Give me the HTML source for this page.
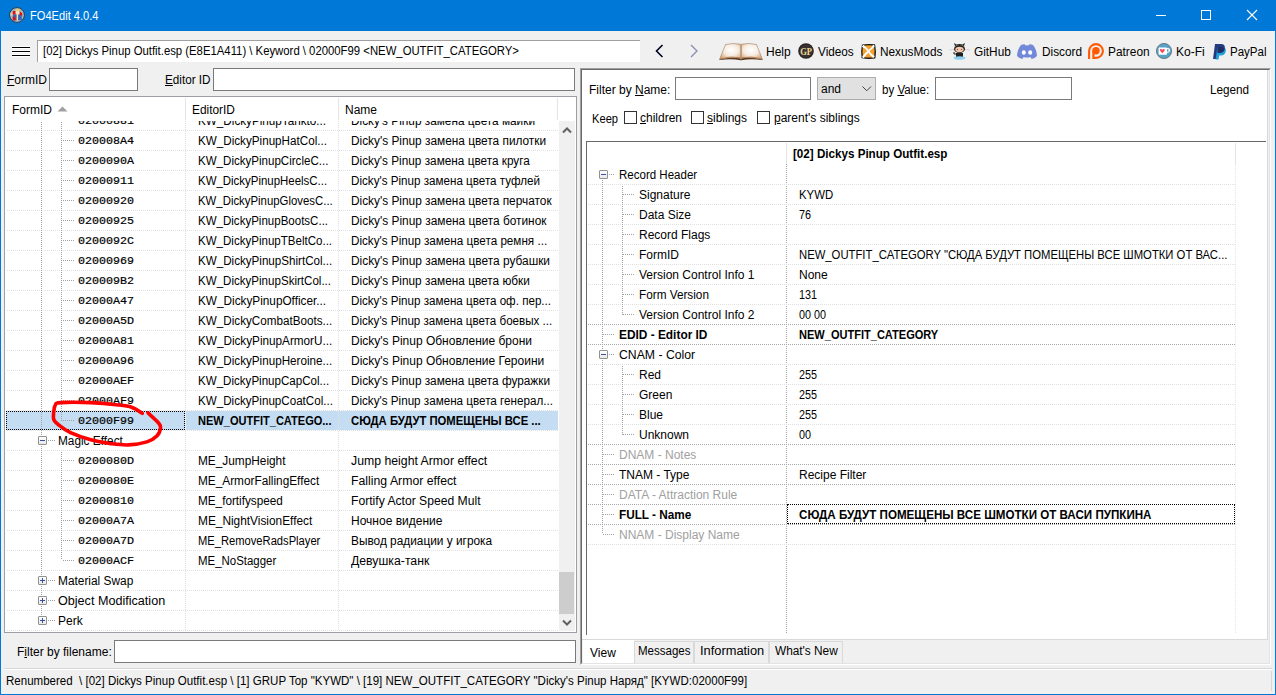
<!DOCTYPE html>
<html><head><meta charset="utf-8"><title>FO4Edit</title>
<style>
html,body{margin:0;padding:0;}
body{width:1276px;height:695px;position:relative;overflow:hidden;background:#f0f0f0;font-family:"Liberation Sans",sans-serif;font-size:12px;color:#000;}
div{position:absolute;box-sizing:content-box;}
div div{position:absolute;}
.t{white-space:pre;line-height:15px;}
u{text-decoration:underline;text-underline-offset:1px;}
</style></head><body>
<div style="left:0px;top:0px;width:1276px;height:31px;background:#0078d7;"></div>
<div style="left:0px;top:0px;width:1px;height:695px;background:#0078d7;"></div>
<div style="left:1275px;top:0px;width:1px;height:695px;background:#0078d7;"></div>
<div style="left:0px;top:694px;width:1276px;height:1px;background:#0078d7;"></div>
<svg style="position:absolute;left:9px;top:7px" width="16" height="16" viewBox="0 0 16 16">
<circle cx="8" cy="8" r="7.4" fill="#a9b6be" stroke="#26323a" stroke-width="0.9"/>
<rect x="3.8" y="7.5" width="9" height="5.8" fill="#3c64b4"/>
<ellipse cx="2.6" cy="7.2" rx="1.4" ry="1.9" fill="#d8c4a4"/>
<rect x="3.8" y="4" width="2.8" height="3.4" fill="#e01010"/>
<path d="M10.2 4 L13 6 L13.4 8.6 L10.8 8.2 Z" fill="#e01010"/>
<rect x="3.8" y="9.8" width="2.6" height="3.6" fill="#e01010"/>
<ellipse cx="8.6" cy="5.2" rx="2" ry="2.2" fill="#f2e2c8"/>
<ellipse cx="8.6" cy="3" rx="2.2" ry="1.3" fill="#e6d070"/>
<rect x="7.6" y="7" width="1.5" height="6.5" fill="#f0e4a0"/>
</svg>
<div class="t" style="left:30px;top:9px;font-family:'Liberation Sans', sans-serif;font-size:12px;color:#fff;transform:scaleX(0.925);transform-origin:0 0;">FO4Edit 4.0.4</div>
<div style="left:1156px;top:15px;width:10px;height:1px;background:#fff;"></div>
<div style="left:1201px;top:10px;width:8px;height:8px;border:1px solid #fff;"></div>
<svg style="position:absolute;left:1246px;top:9px" width="12" height="12" viewBox="0 0 12 12"><path d="M1 1 L11 11 M11 1 L1 11" stroke="#fff" stroke-width="1.1"/></svg>
<div style="left:12px;top:46px;width:18px;height:1px;background:#fff;"></div>
<div style="left:12px;top:47px;width:18px;height:1px;background:#000;"></div>
<div style="left:12px;top:48px;width:18px;height:1px;background:#fff;"></div>
<div style="left:12px;top:50px;width:18px;height:1px;background:#fff;"></div>
<div style="left:12px;top:51px;width:18px;height:1px;background:#000;"></div>
<div style="left:12px;top:52px;width:18px;height:1px;background:#fff;"></div>
<div style="left:12px;top:54px;width:18px;height:1px;background:#fff;"></div>
<div style="left:12px;top:55px;width:18px;height:1px;background:#000;"></div>
<div style="left:12px;top:56px;width:18px;height:1px;background:#fff;"></div>
<div style="left:37px;top:40px;width:602px;height:21px;background:#fff;border-top:1px solid #a0a0a0;border-left:1px solid #a0a0a0;"></div>
<div class="t" style="left:43px;top:44px;font-family:'Liberation Sans', sans-serif;font-size:12px;color:#000;transform:scaleX(0.944);transform-origin:0 0;">[02] Dickys Pinup Outfit.esp (E8E1A411) \ Keyword \ 02000F99 &lt;NEW_OUTFIT_CATEGORY&gt;</div>
<svg style="position:absolute;left:653px;top:43px" width="14" height="16" viewBox="0 0 14 16"><path d="M9.5 2 L3.5 8 L9.5 14" fill="none" stroke="#000028" stroke-width="1.6"/></svg>
<svg style="position:absolute;left:687px;top:43px" width="14" height="16" viewBox="0 0 14 16"><path d="M4 2 L10 8 L4 14" fill="none" stroke="#8a8ab8" stroke-width="1.3"/></svg>
<svg style="position:absolute;left:719px;top:43px" width="44" height="18" viewBox="0 0 44 18">
<defs><radialGradient id="pg1" cx="0.55" cy="0.4" r="0.65"><stop offset="0" stop-color="#ffffff"/><stop offset="0.55" stop-color="#f7ebe0"/><stop offset="1" stop-color="#d9a77a"/></radialGradient>
<radialGradient id="pg2" cx="0.45" cy="0.4" r="0.65"><stop offset="0" stop-color="#ffffff"/><stop offset="0.55" stop-color="#f7ebe0"/><stop offset="1" stop-color="#d9a77a"/></radialGradient></defs>
<path d="M0.5 16.5 L6.5 1.5 Q14 -0.2 21.5 1.2 L21.5 15.5 Q12 13.5 0.5 16.5 Z" fill="url(#pg1)" stroke="#8a6a50" stroke-width="0.5"/>
<path d="M43.5 16.5 L37.5 1.5 Q30 -0.2 22.5 1.2 L22.5 15.5 Q32 13.5 43.5 16.5 Z" fill="url(#pg2)" stroke="#8a6a50" stroke-width="0.5"/>
<path d="M0.5 16.5 Q12 13.5 21.5 15.5 L22.5 15.5 Q32 13.5 43.5 16.5 L43.5 17 Q32 15.2 22.5 17.2 L21.5 17.2 Q12 15.2 0.5 17 Z" fill="#5a3a22"/>
<path d="M1.5 15.8 Q12 12.8 21.5 14.8 L22.5 14.8 Q32 12.8 42.5 15.8" fill="none" stroke="#b07a50" stroke-width="0.9"/>
<path d="M22 1.2 V16.5" stroke="#c89a78" stroke-width="0.8"/>
</svg>
<div class="t" style="left:766px;top:45px;font-family:'Liberation Sans', sans-serif;font-size:12px;color:#000;">Help</div>
<svg style="position:absolute;left:798px;top:43px" width="16" height="16" viewBox="0 0 16 16">
<circle cx="8" cy="8" r="7.8" fill="#2a2220"/><circle cx="8" cy="8" r="6.6" fill="#3a3030"/>
<text x="2.2" y="12.2" font-family="Liberation Serif" font-size="10.5" font-weight="bold" fill="#eedc96" textLength="11.8" lengthAdjust="spacingAndGlyphs">GP</text></svg>
<div class="t" style="left:818px;top:45px;font-family:'Liberation Sans', sans-serif;font-size:12px;color:#000;transform:scaleX(0.98);transform-origin:0 0;">Videos</div>
<svg style="position:absolute;left:860px;top:43px" width="17" height="17" viewBox="0 0 17 17">
<path d="M2.5 2.2 Q8.5 1 14.6 2 Q15.8 8.5 14.8 14.8 Q8.5 15.8 2.2 14.6 Q1.2 8.5 2.5 2.2 Z" fill="#f6a030" stroke="#151515" stroke-width="1.3"/>
<path d="M2.8 3.5 Q6 4.5 8.2 8 Q6.5 5.2 3.5 2.8 Z M13.5 2.6 Q12 6 8.5 7.8 Q11.5 6 13.8 3.2 Z M13.8 13.5 Q11 12 8.8 8.8 Q10.8 11.8 13.2 14 Z M3 13.8 Q5 10.5 8.2 8.8 Q5.5 11 3.6 14.2 Z" fill="#fff" stroke="#fff" stroke-width="1.6" stroke-linejoin="round"/>
</svg>
<div class="t" style="left:880px;top:45px;font-family:'Liberation Sans', sans-serif;font-size:12px;color:#000;transform:scaleX(0.985);transform-origin:0 0;">NexusMods</div>
<svg style="position:absolute;left:949px;top:41px" width="21" height="19" viewBox="0 0 21 19">
<path d="M0 9 L5 8.5 M16 8.5 L21 9" stroke="#c0c0c0" stroke-width="0.6"/>
<path d="M5 2 L6 5 Q10.5 3 15 5 L16 2 L13.5 3.5 Q10.5 2.5 7.5 3.5 Z" fill="#202020"/>
<ellipse cx="10.5" cy="8" rx="5.5" ry="4" fill="#202020"/>
<ellipse cx="10.5" cy="8.5" rx="4.2" ry="2.8" fill="#f4c9b0"/>
<circle cx="8.5" cy="8.5" r="0.7" fill="#a05050"/><circle cx="12.5" cy="8.5" r="0.7" fill="#a05050"/>
<path d="M7 12 L14 12 L14 16 L7 16 Z" fill="#202020"/>
<path d="M7 13 Q4 14 5 11" stroke="#202020" stroke-width="1" fill="none"/>
<ellipse cx="10.5" cy="17" rx="6" ry="1.8" fill="#8ecfef"/>
</svg>
<div class="t" style="left:974px;top:45px;font-family:'Liberation Sans', sans-serif;font-size:12px;color:#000;transform:scaleX(0.985);transform-origin:0 0;">GitHub</div>
<svg style="position:absolute;left:1016px;top:43px" width="22" height="17" viewBox="0 0 22 17">
<path d="M5 2 Q8 0.8 9 1.5 L9.5 2.5 Q11 2.2 12.5 2.5 L13 1.5 Q14 0.8 17 2 Q20.5 6 21 13 Q18.8 15.5 15.5 16 L14.5 14 Q11 15 7.5 14 L6.5 16 Q3.2 15.5 1 13 Q1.5 6 5 2 Z" fill="#7289da"/>
<ellipse cx="7.8" cy="9.5" rx="2" ry="2.2" fill="#fff"/><ellipse cx="14.2" cy="9.5" rx="2" ry="2.2" fill="#fff"/>
</svg>
<div class="t" style="left:1042px;top:45px;font-family:'Liberation Sans', sans-serif;font-size:12px;color:#000;transform:scaleX(0.985);transform-origin:0 0;">Discord</div>
<svg style="position:absolute;left:1086px;top:42px" width="20" height="18" viewBox="0 0 20 18">
<path d="M3.1 17 V9 A6.9 6.9 0 1 1 10 15.9 L8 15.9" fill="none" stroke="#ff5900" stroke-width="2.1"/>
<circle cx="10" cy="8.8" r="3.7" fill="#ff5900"/>
<rect x="6.3" y="8.8" width="2.2" height="8.2" fill="#ff5900"/>
</svg>
<div class="t" style="left:1108px;top:45px;font-family:'Liberation Sans', sans-serif;font-size:12px;color:#000;transform:scaleX(0.99);transform-origin:0 0;">Patreon</div>
<svg style="position:absolute;left:1156px;top:43px" width="17" height="17" viewBox="0 0 17 17">
<circle cx="8" cy="8" r="7.6" fill="#58a2c6" stroke="#5a6a72" stroke-width="0.8"/>
<rect x="2.6" y="4.4" width="8.4" height="7.4" rx="0.8" fill="#fff"/>
<path d="M10.5 5 H12.2 Q14.3 5.2 14.2 7.5 Q14 9.6 11.8 9.7 H10.5 Z" fill="#fff"/>
<rect x="11" y="6.2" width="1.5" height="2.4" fill="#58a2c6"/>
<path d="M6.3 10.2 L4 7.8 Q3.3 6.3 4.8 6 Q5.7 5.9 6.3 6.8 Q6.9 5.9 7.8 6 Q9.3 6.3 8.6 7.8 Z" fill="#ff4a5a"/>
</svg>
<div class="t" style="left:1176px;top:45px;font-family:'Liberation Sans', sans-serif;font-size:12px;color:#000;">Ko-Fi</div>
<svg style="position:absolute;left:1212px;top:43px" width="15" height="17" viewBox="0 0 15 17">
<path d="M3 1 L9 1 Q13.5 1.2 12.8 5.5 Q12 10 7.5 10 L5.5 10 L4.5 16 L1 16 Z" fill="#253b80"/>
<path d="M5.5 4 L10 4 Q14.5 4.5 13.8 8 Q13 12.5 8.7 12.5 L7.2 12.5 L6.5 16.5 L3.5 16.5 Z" fill="#179bd7" opacity="0.95"/>
<path d="M5.5 4 L10 4 Q12.5 4.2 12.8 5.5 Q12 10 7.5 10 L5.5 10 Z" fill="#222d65"/>
</svg>
<div class="t" style="left:1230px;top:45px;font-family:'Liberation Sans', sans-serif;font-size:12px;color:#000;transform:scaleX(0.96);transform-origin:0 0;">PayPal</div>
<div class="t" style="left:7px;top:73px;font-family:'Liberation Sans', sans-serif;font-size:12px;color:#000;"><u>F</u>ormID</div>
<div style="left:49px;top:68px;width:87px;height:21px;background:#fff;border:1px solid #7a7a7a;"></div>
<div class="t" style="left:165px;top:73px;font-family:'Liberation Sans', sans-serif;font-size:12px;color:#000;transform:scaleX(0.976);transform-origin:0 0;"><u>E</u>ditor ID</div>
<div style="left:213px;top:68px;width:360px;height:21px;background:#fff;border:1px solid #7a7a7a;"></div>
<div style="left:4px;top:96px;width:571px;height:535px;background:#fff;border:1px solid #9ca0a6;"></div>
<div class="t" style="left:12px;top:103px;font-family:'Liberation Sans', sans-serif;font-size:12px;color:#000;">FormID</div>
<svg style="position:absolute;left:57px;top:106px" width="11" height="6" viewBox="0 0 11 6"><path d="M0.5 5.5 L5.5 0.5 L10.5 5.5 Z" fill="#a0a0a0"/></svg>
<div class="t" style="left:192px;top:103px;font-family:'Liberation Sans', sans-serif;font-size:12px;color:#000;transform:scaleX(0.99);transform-origin:0 0;">EditorID</div>
<div class="t" style="left:345px;top:103px;font-family:'Liberation Sans', sans-serif;font-size:12px;color:#000;">Name</div>
<div style="left:185px;top:98px;width:1px;height:22px;background:#e5e5e5;"></div>
<div style="left:338px;top:98px;width:1px;height:22px;background:#e5e5e5;"></div>
<div style="left:557px;top:98px;width:1px;height:22px;background:#e5e5e5;"></div>
<div style="left:5px;top:121px;width:554px;height:510px;overflow:hidden;">
<div style="left:2px;top:9px;width:551px;height:1px;background:repeating-linear-gradient(90deg,#e0e0e0 0 1px,transparent 1px 2px);"></div>
<div style="left:2px;top:29px;width:551px;height:1px;background:repeating-linear-gradient(90deg,#e0e0e0 0 1px,transparent 1px 2px);"></div>
<div style="left:2px;top:49px;width:551px;height:1px;background:repeating-linear-gradient(90deg,#e0e0e0 0 1px,transparent 1px 2px);"></div>
<div style="left:2px;top:69px;width:551px;height:1px;background:repeating-linear-gradient(90deg,#e0e0e0 0 1px,transparent 1px 2px);"></div>
<div style="left:2px;top:89px;width:551px;height:1px;background:repeating-linear-gradient(90deg,#e0e0e0 0 1px,transparent 1px 2px);"></div>
<div style="left:2px;top:109px;width:551px;height:1px;background:repeating-linear-gradient(90deg,#e0e0e0 0 1px,transparent 1px 2px);"></div>
<div style="left:2px;top:129px;width:551px;height:1px;background:repeating-linear-gradient(90deg,#e0e0e0 0 1px,transparent 1px 2px);"></div>
<div style="left:2px;top:149px;width:551px;height:1px;background:repeating-linear-gradient(90deg,#e0e0e0 0 1px,transparent 1px 2px);"></div>
<div style="left:2px;top:169px;width:551px;height:1px;background:repeating-linear-gradient(90deg,#e0e0e0 0 1px,transparent 1px 2px);"></div>
<div style="left:2px;top:189px;width:551px;height:1px;background:repeating-linear-gradient(90deg,#e0e0e0 0 1px,transparent 1px 2px);"></div>
<div style="left:2px;top:209px;width:551px;height:1px;background:repeating-linear-gradient(90deg,#e0e0e0 0 1px,transparent 1px 2px);"></div>
<div style="left:2px;top:229px;width:551px;height:1px;background:repeating-linear-gradient(90deg,#e0e0e0 0 1px,transparent 1px 2px);"></div>
<div style="left:2px;top:249px;width:551px;height:1px;background:repeating-linear-gradient(90deg,#e0e0e0 0 1px,transparent 1px 2px);"></div>
<div style="left:2px;top:269px;width:551px;height:1px;background:repeating-linear-gradient(90deg,#e0e0e0 0 1px,transparent 1px 2px);"></div>
<div style="left:2px;top:289px;width:551px;height:1px;background:repeating-linear-gradient(90deg,#e0e0e0 0 1px,transparent 1px 2px);"></div>
<div style="left:1px;top:290px;width:179px;height:19px;background:#c4ddf3;"></div>
<div style="left:181px;top:290px;width:372px;height:19px;background:#c4ddf3;"></div>
<div style="left:2px;top:309px;width:551px;height:1px;background:repeating-linear-gradient(90deg,#e0e0e0 0 1px,transparent 1px 2px);"></div>
<div style="left:2px;top:329px;width:551px;height:1px;background:repeating-linear-gradient(90deg,#e0e0e0 0 1px,transparent 1px 2px);"></div>
<div style="left:2px;top:349px;width:551px;height:1px;background:repeating-linear-gradient(90deg,#e0e0e0 0 1px,transparent 1px 2px);"></div>
<div style="left:2px;top:369px;width:551px;height:1px;background:repeating-linear-gradient(90deg,#e0e0e0 0 1px,transparent 1px 2px);"></div>
<div style="left:2px;top:389px;width:551px;height:1px;background:repeating-linear-gradient(90deg,#e0e0e0 0 1px,transparent 1px 2px);"></div>
<div style="left:2px;top:409px;width:551px;height:1px;background:repeating-linear-gradient(90deg,#e0e0e0 0 1px,transparent 1px 2px);"></div>
<div style="left:2px;top:429px;width:551px;height:1px;background:repeating-linear-gradient(90deg,#e0e0e0 0 1px,transparent 1px 2px);"></div>
<div style="left:2px;top:449px;width:551px;height:1px;background:repeating-linear-gradient(90deg,#e0e0e0 0 1px,transparent 1px 2px);"></div>
<div style="left:2px;top:469px;width:551px;height:1px;background:repeating-linear-gradient(90deg,#e0e0e0 0 1px,transparent 1px 2px);"></div>
<div style="left:2px;top:489px;width:551px;height:1px;background:repeating-linear-gradient(90deg,#e0e0e0 0 1px,transparent 1px 2px);"></div>
<div style="left:2px;top:509px;width:551px;height:1px;background:repeating-linear-gradient(90deg,#e0e0e0 0 1px,transparent 1px 2px);"></div>
<div style="left:2px;top:529px;width:551px;height:1px;background:repeating-linear-gradient(90deg,#e0e0e0 0 1px,transparent 1px 2px);"></div>
<div style="left:2px;top:549px;width:551px;height:1px;background:repeating-linear-gradient(90deg,#e0e0e0 0 1px,transparent 1px 2px);"></div>
<div style="left:2px;top:569px;width:551px;height:1px;background:repeating-linear-gradient(90deg,#e0e0e0 0 1px,transparent 1px 2px);"></div>
<div style="left:2px;top:589px;width:551px;height:1px;background:repeating-linear-gradient(90deg,#e0e0e0 0 1px,transparent 1px 2px);"></div>
<div style="left:180px;top:0px;width:1px;height:510px;background:repeating-linear-gradient(180deg,#e0e0e0 0 1px,transparent 1px 2px);"></div>
<div style="left:333px;top:0px;width:1px;height:510px;background:repeating-linear-gradient(180deg,#e0e0e0 0 1px,transparent 1px 2px);"></div>
<div style="left:36px;top:1px;width:1px;height:449px;background:repeating-linear-gradient(180deg,#a0a0a0 0 1px,transparent 1px 2px);"></div>
<div style="left:36px;top:1px;width:1px;height:499px;background:repeating-linear-gradient(180deg,#a0a0a0 0 1px,transparent 1px 2px);"></div>
<div style="left:56px;top:1px;width:1px;height:299px;background:repeating-linear-gradient(180deg,#a0a0a0 0 1px,transparent 1px 2px);"></div>
<div style="left:56px;top:331px;width:1px;height:108px;background:repeating-linear-gradient(180deg,#a0a0a0 0 1px,transparent 1px 2px);"></div>
<div style="left:58px;top:-1px;width:11px;height:1px;background:repeating-linear-gradient(90deg,#a0a0a0 0 1px,transparent 1px 2px);"></div>
<div class="t" style="left:73px;top:-7px;font-family:'Liberation Mono',monospace;font-size:11.7px;-webkit-text-stroke:0.2px #000;">02000881</div>
<div class="t" style="left:193px;top:-7px;font-size:12px;transform:scaleX(0.9748);transform-origin:0 0;">KW_DickyPinupTanktо...</div>
<div class="t" style="left:346px;top:-7px;font-size:12px;transform:scaleX(0.9835);transform-origin:0 0;">Dicky&#x27;s Pinup замена цвета майки</div>
<div style="left:58px;top:19px;width:11px;height:1px;background:repeating-linear-gradient(90deg,#a0a0a0 0 1px,transparent 1px 2px);"></div>
<div class="t" style="left:73px;top:13px;font-family:'Liberation Mono',monospace;font-size:11.7px;-webkit-text-stroke:0.2px #000;">020008A4</div>
<div class="t" style="left:193px;top:13px;font-size:12px;transform:scaleX(0.9718);transform-origin:0 0;">KW_DickyPinupHatCol...</div>
<div class="t" style="left:346px;top:13px;font-size:12px;transform:scaleX(0.9869);transform-origin:0 0;">Dicky&#x27;s Pinup замена цвета пилотки</div>
<div style="left:58px;top:39px;width:11px;height:1px;background:repeating-linear-gradient(90deg,#a0a0a0 0 1px,transparent 1px 2px);"></div>
<div class="t" style="left:73px;top:33px;font-family:'Liberation Mono',monospace;font-size:11.7px;-webkit-text-stroke:0.2px #000;">0200090A</div>
<div class="t" style="left:193px;top:33px;font-size:12px;transform:scaleX(0.963);transform-origin:0 0;">KW_DickyPinupCircleC...</div>
<div class="t" style="left:346px;top:33px;font-size:12px;transform:scaleX(0.9825);transform-origin:0 0;">Dicky&#x27;s Pinup замена цвета круга</div>
<div style="left:58px;top:59px;width:11px;height:1px;background:repeating-linear-gradient(90deg,#a0a0a0 0 1px,transparent 1px 2px);"></div>
<div class="t" style="left:73px;top:53px;font-family:'Liberation Mono',monospace;font-size:11.7px;-webkit-text-stroke:0.2px #000;">02000911</div>
<div class="t" style="left:193px;top:53px;font-size:12px;transform:scaleX(0.954);transform-origin:0 0;">KW_DickyPinupHeelsC...</div>
<div class="t" style="left:346px;top:53px;font-size:12px;transform:scaleX(0.9697);transform-origin:0 0;">Dicky&#x27;s Pinup замена цвета туфлей</div>
<div style="left:58px;top:79px;width:11px;height:1px;background:repeating-linear-gradient(90deg,#a0a0a0 0 1px,transparent 1px 2px);"></div>
<div class="t" style="left:73px;top:73px;font-family:'Liberation Mono',monospace;font-size:11.7px;-webkit-text-stroke:0.2px #000;">02000920</div>
<div class="t" style="left:193px;top:73px;font-size:12px;transform:scaleX(0.9486);transform-origin:0 0;">KW_DickyPinupGlovesC...</div>
<div class="t" style="left:346px;top:73px;font-size:12px;transform:scaleX(0.988);transform-origin:0 0;">Dicky&#x27;s Pinup замена цвета перчаток</div>
<div style="left:58px;top:99px;width:11px;height:1px;background:repeating-linear-gradient(90deg,#a0a0a0 0 1px,transparent 1px 2px);"></div>
<div class="t" style="left:73px;top:93px;font-family:'Liberation Mono',monospace;font-size:11.7px;-webkit-text-stroke:0.2px #000;">02000925</div>
<div class="t" style="left:193px;top:93px;font-size:12px;transform:scaleX(0.9606);transform-origin:0 0;">KW_DickyPinupBootsC...</div>
<div class="t" style="left:346px;top:93px;font-size:12px;transform:scaleX(0.9897);transform-origin:0 0;">Dicky&#x27;s Pinup замена цвета ботинок</div>
<div style="left:58px;top:119px;width:11px;height:1px;background:repeating-linear-gradient(90deg,#a0a0a0 0 1px,transparent 1px 2px);"></div>
<div class="t" style="left:73px;top:113px;font-family:'Liberation Mono',monospace;font-size:11.7px;-webkit-text-stroke:0.2px #000;">0200092C</div>
<div class="t" style="left:193px;top:113px;font-size:12px;transform:scaleX(0.9618);transform-origin:0 0;">KW_DickyPinupTBeltCo...</div>
<div class="t" style="left:346px;top:113px;font-size:12px;transform:scaleX(0.9733);transform-origin:0 0;">Dicky&#x27;s Pinup замена цвета ремня ...</div>
<div style="left:58px;top:139px;width:11px;height:1px;background:repeating-linear-gradient(90deg,#a0a0a0 0 1px,transparent 1px 2px);"></div>
<div class="t" style="left:73px;top:133px;font-family:'Liberation Mono',monospace;font-size:11.7px;-webkit-text-stroke:0.2px #000;">02000969</div>
<div class="t" style="left:193px;top:133px;font-size:12px;transform:scaleX(0.9679);transform-origin:0 0;">KW_DickyPinupShirtCol...</div>
<div class="t" style="left:346px;top:133px;font-size:12px;transform:scaleX(0.99);transform-origin:0 0;">Dicky&#x27;s Pinup замена цвета рубашки</div>
<div style="left:58px;top:159px;width:11px;height:1px;background:repeating-linear-gradient(90deg,#a0a0a0 0 1px,transparent 1px 2px);"></div>
<div class="t" style="left:73px;top:153px;font-family:'Liberation Mono',monospace;font-size:11.7px;-webkit-text-stroke:0.2px #000;">020009B2</div>
<div class="t" style="left:193px;top:153px;font-size:12px;transform:scaleX(0.9639);transform-origin:0 0;">KW_DickyPinupSkirtCol...</div>
<div class="t" style="left:346px;top:153px;font-size:12px;transform:scaleX(0.9866);transform-origin:0 0;">Dicky&#x27;s Pinup замена цвета юбки</div>
<div style="left:58px;top:179px;width:11px;height:1px;background:repeating-linear-gradient(90deg,#a0a0a0 0 1px,transparent 1px 2px);"></div>
<div class="t" style="left:73px;top:173px;font-family:'Liberation Mono',monospace;font-size:11.7px;-webkit-text-stroke:0.2px #000;">02000A47</div>
<div class="t" style="left:193px;top:173px;font-size:12px;transform:scaleX(0.9815);transform-origin:0 0;">KW_DickyPinupOfficer...</div>
<div class="t" style="left:346px;top:173px;font-size:12px;transform:scaleX(0.9686);transform-origin:0 0;">Dicky&#x27;s Pinup замена цвета оф. пер...</div>
<div style="left:58px;top:199px;width:11px;height:1px;background:repeating-linear-gradient(90deg,#a0a0a0 0 1px,transparent 1px 2px);"></div>
<div class="t" style="left:73px;top:193px;font-family:'Liberation Mono',monospace;font-size:11.7px;-webkit-text-stroke:0.2px #000;">02000A5D</div>
<div class="t" style="left:193px;top:193px;font-size:12px;transform:scaleX(0.9727);transform-origin:0 0;">KW_DickyCombatBoots...</div>
<div class="t" style="left:346px;top:193px;font-size:12px;transform:scaleX(0.9675);transform-origin:0 0;">Dicky&#x27;s Pinup замена цвета боевых ...</div>
<div style="left:58px;top:219px;width:11px;height:1px;background:repeating-linear-gradient(90deg,#a0a0a0 0 1px,transparent 1px 2px);"></div>
<div class="t" style="left:73px;top:213px;font-family:'Liberation Mono',monospace;font-size:11.7px;-webkit-text-stroke:0.2px #000;">02000A81</div>
<div class="t" style="left:193px;top:213px;font-size:12px;transform:scaleX(0.9775);transform-origin:0 0;">KW_DickyPinupArmorU...</div>
<div class="t" style="left:346px;top:213px;font-size:12px;transform:scaleX(0.9991);transform-origin:0 0;">Dicky&#x27;s Pinup Обновление брони</div>
<div style="left:58px;top:239px;width:11px;height:1px;background:repeating-linear-gradient(90deg,#a0a0a0 0 1px,transparent 1px 2px);"></div>
<div class="t" style="left:73px;top:233px;font-family:'Liberation Mono',monospace;font-size:11.7px;-webkit-text-stroke:0.2px #000;">02000A96</div>
<div class="t" style="left:193px;top:233px;font-size:12px;transform:scaleX(0.9725);transform-origin:0 0;">KW_DickyPinupHeroine...</div>
<div class="t" style="left:346px;top:233px;font-size:12px;transform:scaleX(0.9992);transform-origin:0 0;">Dicky&#x27;s Pinup Обновление Героини</div>
<div style="left:58px;top:259px;width:11px;height:1px;background:repeating-linear-gradient(90deg,#a0a0a0 0 1px,transparent 1px 2px);"></div>
<div class="t" style="left:73px;top:253px;font-family:'Liberation Mono',monospace;font-size:11.7px;-webkit-text-stroke:0.2px #000;">02000AEF</div>
<div class="t" style="left:193px;top:253px;font-size:12px;transform:scaleX(0.9647);transform-origin:0 0;">KW_DickyPinupCapCol...</div>
<div class="t" style="left:346px;top:253px;font-size:12px;transform:scaleX(0.9831);transform-origin:0 0;">Dicky&#x27;s Pinup замена цвета фуражки</div>
<div style="left:58px;top:279px;width:11px;height:1px;background:repeating-linear-gradient(90deg,#a0a0a0 0 1px,transparent 1px 2px);"></div>
<div class="t" style="left:73px;top:273px;font-family:'Liberation Mono',monospace;font-size:11.7px;-webkit-text-stroke:0.2px #000;">02000AF9</div>
<div class="t" style="left:193px;top:273px;font-size:12px;transform:scaleX(0.9683);transform-origin:0 0;">KW_DickyPinupCoatCol...</div>
<div class="t" style="left:346px;top:273px;font-size:12px;transform:scaleX(0.9714);transform-origin:0 0;">Dicky&#x27;s Pinup замена цвета генерал...</div>
<div style="left:58px;top:299px;width:11px;height:1px;background:repeating-linear-gradient(90deg,#a0a0a0 0 1px,transparent 1px 2px);"></div>
<div class="t" style="left:73px;top:293px;font-family:'Liberation Mono',monospace;font-size:11.7px;-webkit-text-stroke:0.2px #000;">02000F99</div>
<div class="t" style="left:193px;top:293px;font-size:12px;font-weight:bold;transform:scaleX(0.92);transform-origin:0 0;">NEW_OUTFIT_CATEGO...</div>
<div class="t" style="left:346px;top:293px;font-size:12px;font-weight:bold;transform:scaleX(0.9419);transform-origin:0 0;">СЮДА БУДУТ ПОМЕЩЕНЫ ВСЕ ...</div>
<div style="left:33px;top:315px;width:7px;height:7px;border:1px solid #919191;border-radius:1px;background:linear-gradient(#fff,#e8e8e8);"></div>
<div style="left:35px;top:319px;width:5px;height:1px;background:#3c50a0;"></div>
<div style="left:43px;top:319px;width:7px;height:1px;background:repeating-linear-gradient(90deg,#a0a0a0 0 1px,transparent 1px 2px);"></div>
<div class="t" style="left:53px;top:313px;font-size:12px;transform:scaleX(0.985);transform-origin:0 0;">Magic Effect</div>
<div style="left:58px;top:339px;width:11px;height:1px;background:repeating-linear-gradient(90deg,#a0a0a0 0 1px,transparent 1px 2px);"></div>
<div class="t" style="left:73px;top:333px;font-family:'Liberation Mono',monospace;font-size:11.7px;-webkit-text-stroke:0.2px #000;">0200080D</div>
<div class="t" style="left:193px;top:333px;font-size:12px;transform:scaleX(0.9861);transform-origin:0 0;">ME_JumpHeight</div>
<div class="t" style="left:346px;top:333px;font-size:12px;transform:scaleX(1.0228);transform-origin:0 0;">Jump height Armor effect</div>
<div style="left:58px;top:359px;width:11px;height:1px;background:repeating-linear-gradient(90deg,#a0a0a0 0 1px,transparent 1px 2px);"></div>
<div class="t" style="left:73px;top:353px;font-family:'Liberation Mono',monospace;font-size:11.7px;-webkit-text-stroke:0.2px #000;">0200080E</div>
<div class="t" style="left:193px;top:353px;font-size:12px;transform:scaleX(0.984);transform-origin:0 0;">ME_ArmorFallingEffect</div>
<div class="t" style="left:346px;top:353px;font-size:12px;transform:scaleX(1.0229);transform-origin:0 0;">Falling Armor effect</div>
<div style="left:58px;top:379px;width:11px;height:1px;background:repeating-linear-gradient(90deg,#a0a0a0 0 1px,transparent 1px 2px);"></div>
<div class="t" style="left:73px;top:373px;font-family:'Liberation Mono',monospace;font-size:11.7px;-webkit-text-stroke:0.2px #000;">02000810</div>
<div class="t" style="left:193px;top:373px;font-size:12px;transform:scaleX(0.9788);transform-origin:0 0;">ME_fortifyspeed</div>
<div class="t" style="left:346px;top:373px;font-size:12px;transform:scaleX(1.0113);transform-origin:0 0;">Fortify Actor Speed Mult</div>
<div style="left:58px;top:399px;width:11px;height:1px;background:repeating-linear-gradient(90deg,#a0a0a0 0 1px,transparent 1px 2px);"></div>
<div class="t" style="left:73px;top:393px;font-family:'Liberation Mono',monospace;font-size:11.7px;-webkit-text-stroke:0.2px #000;">02000A7A</div>
<div class="t" style="left:193px;top:393px;font-size:12px;transform:scaleX(0.9884);transform-origin:0 0;">ME_NightVisionEffect</div>
<div class="t" style="left:346px;top:393px;font-size:12px;transform:scaleX(1.001);transform-origin:0 0;">Ночное видение</div>
<div style="left:58px;top:419px;width:11px;height:1px;background:repeating-linear-gradient(90deg,#a0a0a0 0 1px,transparent 1px 2px);"></div>
<div class="t" style="left:73px;top:413px;font-family:'Liberation Mono',monospace;font-size:11.7px;-webkit-text-stroke:0.2px #000;">02000A7D</div>
<div class="t" style="left:193px;top:413px;font-size:12px;transform:scaleX(0.931);transform-origin:0 0;">ME_RemoveRadsPlayer</div>
<div class="t" style="left:346px;top:413px;font-size:12px;transform:scaleX(0.9873);transform-origin:0 0;">Вывод радиации у игрока</div>
<div style="left:58px;top:439px;width:11px;height:1px;background:repeating-linear-gradient(90deg,#a0a0a0 0 1px,transparent 1px 2px);"></div>
<div class="t" style="left:73px;top:433px;font-family:'Liberation Mono',monospace;font-size:11.7px;-webkit-text-stroke:0.2px #000;">02000ACF</div>
<div class="t" style="left:193px;top:433px;font-size:12px;transform:scaleX(0.9538);transform-origin:0 0;">ME_NoStagger</div>
<div class="t" style="left:346px;top:433px;font-size:12px;transform:scaleX(1.0219);transform-origin:0 0;">Девушка-танк</div>
<div style="left:33px;top:455px;width:7px;height:7px;border:1px solid #919191;border-radius:1px;background:linear-gradient(#fff,#e8e8e8);"></div>
<div style="left:35px;top:459px;width:5px;height:1px;background:#3c50a0;"></div>
<div style="left:37px;top:457px;width:1px;height:5px;background:#3c50a0;"></div>
<div style="left:43px;top:459px;width:7px;height:1px;background:repeating-linear-gradient(90deg,#a0a0a0 0 1px,transparent 1px 2px);"></div>
<div class="t" style="left:53px;top:453px;font-size:12px;transform:scaleX(0.99);transform-origin:0 0;">Material Swap</div>
<div style="left:33px;top:475px;width:7px;height:7px;border:1px solid #919191;border-radius:1px;background:linear-gradient(#fff,#e8e8e8);"></div>
<div style="left:35px;top:479px;width:5px;height:1px;background:#3c50a0;"></div>
<div style="left:37px;top:477px;width:1px;height:5px;background:#3c50a0;"></div>
<div style="left:43px;top:479px;width:7px;height:1px;background:repeating-linear-gradient(90deg,#a0a0a0 0 1px,transparent 1px 2px);"></div>
<div class="t" style="left:53px;top:473px;font-size:12px;transform:scaleX(1.05);transform-origin:0 0;">Object Modification</div>
<div style="left:33px;top:495px;width:7px;height:7px;border:1px solid #919191;border-radius:1px;background:linear-gradient(#fff,#e8e8e8);"></div>
<div style="left:35px;top:499px;width:5px;height:1px;background:#3c50a0;"></div>
<div style="left:37px;top:497px;width:1px;height:5px;background:#3c50a0;"></div>
<div style="left:43px;top:499px;width:7px;height:1px;background:repeating-linear-gradient(90deg,#a0a0a0 0 1px,transparent 1px 2px);"></div>
<div class="t" style="left:53px;top:493px;font-size:12px;transform:scaleX(1.0);transform-origin:0 0;">Perk</div>
<div style="left:1px;top:290px;width:179px;height:19px;border:1px dotted #000;box-sizing:border-box;"></div>
</div>
<div style="left:559px;top:121px;width:16px;height:510px;background:#f0f0f0;"></div>
<div style="left:559px;top:572px;width:15px;height:42px;background:#cdcdcd;"></div>
<svg style="position:absolute;left:562px;top:126px" width="10" height="8" viewBox="0 0 10 8"><path d="M1 6.5 L5 2.5 L9 6.5" fill="none" stroke="#606060" stroke-width="2"/></svg>
<svg style="position:absolute;left:562px;top:619px" width="10" height="8" viewBox="0 0 10 8"><path d="M1 1.5 L5 5.5 L9 1.5" fill="none" stroke="#606060" stroke-width="2"/></svg>
<div class="t" style="left:17px;top:645px;font-family:'Liberation Sans', sans-serif;font-size:12px;color:#000;">F<u>i</u>lter by filename:</div>
<div style="left:114px;top:640px;width:460px;height:21px;background:#fff;border:1px solid #7a7a7a;"></div>
<div style="left:580px;top:68px;width:691px;height:597px;background:#f0f0f0;border-top:1px solid #a0a0a0;border-left:1px solid #a0a0a0;border-right:1px solid #fff;border-bottom:1px solid #fff;box-sizing:border-box;"></div>
<div style="left:581px;top:69px;width:689px;height:595px;border-top:1px solid #696969;border-left:1px solid #696969;border-right:1px solid #e3e3e3;border-bottom:1px solid #e3e3e3;box-sizing:border-box;"></div>
<div style="left:582px;top:70px;width:686px;height:570px;background:#fff;border-right:1px solid #d9d9d9;border-bottom:1px solid #d9d9d9;box-sizing:border-box;"></div>
<div class="t" style="left:589px;top:83px;font-family:'Liberation Sans', sans-serif;font-size:12px;color:#000;">Filter by <u>N</u>ame:</div>
<div style="left:675px;top:77px;width:134px;height:21px;background:#fff;border:1px solid #7a7a7a;"></div>
<div style="left:817px;top:77px;width:57px;height:21px;background:#e1e1e1;border:1px solid #adadad;"></div>
<div class="t" style="left:821px;top:82px;font-family:'Liberation Sans', sans-serif;font-size:12px;color:#000;">and</div>
<svg style="position:absolute;left:862px;top:86px" width="10" height="6" viewBox="0 0 10 6"><path d="M0.5 0.5 L4.75 4.75 L9 0.5" fill="none" stroke="#404040" stroke-width="1"/></svg>
<div class="t" style="left:882px;top:83px;font-family:'Liberation Sans', sans-serif;font-size:12px;color:#000;transform:scaleX(0.96);transform-origin:0 0;">by <u>V</u>alue:</div>
<div style="left:935px;top:77px;width:135px;height:21px;background:#fff;border:1px solid #7a7a7a;"></div>
<div class="t" style="left:1210px;top:83px;font-family:'Liberation Sans', sans-serif;font-size:12px;color:#000;transform:scaleX(0.977);transform-origin:0 0;">Legend</div>
<div class="t" style="left:592px;top:112px;font-family:'Liberation Sans', sans-serif;font-size:12px;color:#000;transform:scaleX(0.93);transform-origin:0 0;">Keep</div>
<div style="left:624px;top:111px;width:11px;height:11px;background:#fff;border:1px solid #333;"></div>
<div class="t" style="left:640px;top:111px;font-family:'Liberation Sans', sans-serif;font-size:12px;color:#000;"><u>c</u>hildren</div>
<div style="left:691px;top:111px;width:11px;height:11px;background:#fff;border:1px solid #333;"></div>
<div class="t" style="left:707px;top:111px;font-family:'Liberation Sans', sans-serif;font-size:12px;color:#000;"><u>s</u>iblings</div>
<div style="left:757px;top:111px;width:11px;height:11px;background:#fff;border:1px solid #333;"></div>
<div class="t" style="left:774px;top:111px;font-family:'Liberation Sans', sans-serif;font-size:12px;color:#000;"><u>p</u>arent's siblings</div>
<div style="left:586px;top:141px;width:679px;height:493px;background:#fff;border-top:1px solid #696969;border-left:1px solid #696969;"></div>
<div style="left:786px;top:143px;width:1px;height:21px;background:#e5e5e5;"></div>
<div style="left:1235px;top:143px;width:1px;height:21px;background:#e5e5e5;"></div>
<div class="t" style="left:793px;top:147px;font-family:'Liberation Sans', sans-serif;font-size:12px;font-weight:bold;color:#000;transform:scaleX(0.969);transform-origin:0 0;">[02] Dickys Pinup Outfit.esp</div>
<div style="left:786px;top:164px;width:1px;height:470px;background:repeating-linear-gradient(180deg,#a8a8a8 0 1px,transparent 1px 2px);"></div>
<div style="left:1235px;top:164px;width:1px;height:470px;background:repeating-linear-gradient(180deg,#e5e5e5 0 1px,transparent 1px 2px);"></div>
<div style="left:588px;top:184px;width:647px;height:1px;background:repeating-linear-gradient(90deg,#e0e0e0 0 1px,transparent 1px 2px);"></div>
<div style="left:588px;top:204px;width:647px;height:1px;background:repeating-linear-gradient(90deg,#e0e0e0 0 1px,transparent 1px 2px);"></div>
<div style="left:588px;top:224px;width:647px;height:1px;background:repeating-linear-gradient(90deg,#e0e0e0 0 1px,transparent 1px 2px);"></div>
<div style="left:588px;top:244px;width:647px;height:1px;background:repeating-linear-gradient(90deg,#e0e0e0 0 1px,transparent 1px 2px);"></div>
<div style="left:588px;top:264px;width:647px;height:1px;background:repeating-linear-gradient(90deg,#e0e0e0 0 1px,transparent 1px 2px);"></div>
<div style="left:588px;top:284px;width:647px;height:1px;background:repeating-linear-gradient(90deg,#e0e0e0 0 1px,transparent 1px 2px);"></div>
<div style="left:588px;top:304px;width:647px;height:1px;background:repeating-linear-gradient(90deg,#e0e0e0 0 1px,transparent 1px 2px);"></div>
<div style="left:588px;top:324px;width:647px;height:1px;background:repeating-linear-gradient(90deg,#a8a8a8 0 1px,transparent 1px 2px);"></div>
<div style="left:588px;top:344px;width:647px;height:1px;background:repeating-linear-gradient(90deg,#a8a8a8 0 1px,transparent 1px 2px);"></div>
<div style="left:588px;top:364px;width:647px;height:1px;background:repeating-linear-gradient(90deg,#e0e0e0 0 1px,transparent 1px 2px);"></div>
<div style="left:588px;top:384px;width:647px;height:1px;background:repeating-linear-gradient(90deg,#e0e0e0 0 1px,transparent 1px 2px);"></div>
<div style="left:588px;top:404px;width:647px;height:1px;background:repeating-linear-gradient(90deg,#e0e0e0 0 1px,transparent 1px 2px);"></div>
<div style="left:588px;top:424px;width:647px;height:1px;background:repeating-linear-gradient(90deg,#e0e0e0 0 1px,transparent 1px 2px);"></div>
<div style="left:588px;top:444px;width:647px;height:1px;background:repeating-linear-gradient(90deg,#a8a8a8 0 1px,transparent 1px 2px);"></div>
<div style="left:588px;top:464px;width:647px;height:1px;background:repeating-linear-gradient(90deg,#a8a8a8 0 1px,transparent 1px 2px);"></div>
<div style="left:588px;top:484px;width:647px;height:1px;background:repeating-linear-gradient(90deg,#a8a8a8 0 1px,transparent 1px 2px);"></div>
<div style="left:588px;top:504px;width:647px;height:1px;background:repeating-linear-gradient(90deg,#a8a8a8 0 1px,transparent 1px 2px);"></div>
<div style="left:588px;top:524px;width:647px;height:1px;background:repeating-linear-gradient(90deg,#a8a8a8 0 1px,transparent 1px 2px);"></div>
<div style="left:588px;top:544px;width:647px;height:1px;background:repeating-linear-gradient(90deg,#e0e0e0 0 1px,transparent 1px 2px);"></div>
<div style="left:602px;top:180px;width:1px;height:354px;background:repeating-linear-gradient(180deg,#a0a0a0 0 1px,transparent 1px 2px);"></div>
<div style="left:622px;top:186px;width:1px;height:129px;background:repeating-linear-gradient(180deg,#a0a0a0 0 1px,transparent 1px 2px);"></div>
<div style="left:622px;top:366px;width:1px;height:69px;background:repeating-linear-gradient(180deg,#a0a0a0 0 1px,transparent 1px 2px);"></div>
<div style="left:599px;top:170px;width:7px;height:7px;border:1px solid #919191;border-radius:1px;background:linear-gradient(#fff,#e8e8e8);"></div>
<div style="left:601px;top:174px;width:5px;height:1px;background:#3c50a0;"></div>
<div style="left:609px;top:174px;width:6px;height:1px;background:repeating-linear-gradient(90deg,#a0a0a0 0 1px,transparent 1px 2px);"></div>
<div class="t" style="left:619px;top:168px;font-family:'Liberation Sans', sans-serif;font-size:12px;color:#000;transform:scaleX(0.96);transform-origin:0 0;">Record Header</div>
<div style="left:623px;top:194px;width:12px;height:1px;background:repeating-linear-gradient(90deg,#a0a0a0 0 1px,transparent 1px 2px);"></div>
<div class="t" style="left:639px;top:188px;font-family:'Liberation Sans', sans-serif;font-size:12px;color:#000;">Signature</div>
<div class="t" style="left:799px;top:188px;font-family:'Liberation Sans', sans-serif;font-size:12px;color:#000;transform:scaleX(0.95);transform-origin:0 0;">KYWD</div>
<div style="left:623px;top:214px;width:12px;height:1px;background:repeating-linear-gradient(90deg,#a0a0a0 0 1px,transparent 1px 2px);"></div>
<div class="t" style="left:639px;top:208px;font-family:'Liberation Sans', sans-serif;font-size:12px;color:#000;">Data Size</div>
<div class="t" style="left:799px;top:208px;font-family:'Liberation Sans', sans-serif;font-size:12px;color:#000;transform:scaleX(0.9);transform-origin:0 0;">76</div>
<div style="left:623px;top:234px;width:12px;height:1px;background:repeating-linear-gradient(90deg,#a0a0a0 0 1px,transparent 1px 2px);"></div>
<div class="t" style="left:639px;top:228px;font-family:'Liberation Sans', sans-serif;font-size:12px;color:#000;">Record Flags</div>
<div style="left:623px;top:254px;width:12px;height:1px;background:repeating-linear-gradient(90deg,#a0a0a0 0 1px,transparent 1px 2px);"></div>
<div class="t" style="left:639px;top:248px;font-family:'Liberation Sans', sans-serif;font-size:12px;color:#000;">FormID</div>
<div class="t" style="left:799px;top:248px;font-family:'Liberation Sans', sans-serif;font-size:12px;color:#000;transform:scaleX(0.941);transform-origin:0 0;">NEW_OUTFIT_CATEGORY &quot;СЮДА БУДУТ ПОМЕЩЕНЫ ВСЕ ШМОТКИ ОТ ВАС...</div>
<div style="left:623px;top:274px;width:12px;height:1px;background:repeating-linear-gradient(90deg,#a0a0a0 0 1px,transparent 1px 2px);"></div>
<div class="t" style="left:639px;top:268px;font-family:'Liberation Sans', sans-serif;font-size:12px;color:#000;">Version Control Info 1</div>
<div class="t" style="left:799px;top:268px;font-family:'Liberation Sans', sans-serif;font-size:12px;color:#000;">None</div>
<div style="left:623px;top:294px;width:12px;height:1px;background:repeating-linear-gradient(90deg,#a0a0a0 0 1px,transparent 1px 2px);"></div>
<div class="t" style="left:639px;top:288px;font-family:'Liberation Sans', sans-serif;font-size:12px;color:#000;transform:scaleX(0.98);transform-origin:0 0;">Form Version</div>
<div class="t" style="left:799px;top:288px;font-family:'Liberation Sans', sans-serif;font-size:12px;color:#000;transform:scaleX(0.9);transform-origin:0 0;">131</div>
<div style="left:623px;top:314px;width:12px;height:1px;background:repeating-linear-gradient(90deg,#a0a0a0 0 1px,transparent 1px 2px);"></div>
<div class="t" style="left:639px;top:308px;font-family:'Liberation Sans', sans-serif;font-size:12px;color:#000;">Version Control Info 2</div>
<div class="t" style="left:799px;top:308px;font-family:'Liberation Sans', sans-serif;font-size:12px;color:#000;transform:scaleX(0.9);transform-origin:0 0;">00 00</div>
<div style="left:603px;top:334px;width:12px;height:1px;background:repeating-linear-gradient(90deg,#a0a0a0 0 1px,transparent 1px 2px);"></div>
<div class="t" style="left:619px;top:328px;font-family:'Liberation Sans', sans-serif;font-size:12px;font-weight:bold;color:#000;transform:scaleX(0.99);transform-origin:0 0;">EDID - Editor ID</div>
<div class="t" style="left:799px;top:328px;font-family:'Liberation Sans', sans-serif;font-size:12px;font-weight:bold;color:#000;transform:scaleX(0.92);transform-origin:0 0;">NEW_OUTFIT_CATEGORY</div>
<div style="left:599px;top:350px;width:7px;height:7px;border:1px solid #919191;border-radius:1px;background:linear-gradient(#fff,#e8e8e8);"></div>
<div style="left:601px;top:354px;width:5px;height:1px;background:#3c50a0;"></div>
<div style="left:609px;top:354px;width:6px;height:1px;background:repeating-linear-gradient(90deg,#a0a0a0 0 1px,transparent 1px 2px);"></div>
<div class="t" style="left:619px;top:348px;font-family:'Liberation Sans', sans-serif;font-size:12px;color:#000;transform:scaleX(1.02);transform-origin:0 0;">CNAM - Color</div>
<div style="left:623px;top:374px;width:12px;height:1px;background:repeating-linear-gradient(90deg,#a0a0a0 0 1px,transparent 1px 2px);"></div>
<div class="t" style="left:639px;top:368px;font-family:'Liberation Sans', sans-serif;font-size:12px;color:#000;">Red</div>
<div class="t" style="left:799px;top:368px;font-family:'Liberation Sans', sans-serif;font-size:12px;color:#000;transform:scaleX(0.9);transform-origin:0 0;">255</div>
<div style="left:623px;top:394px;width:12px;height:1px;background:repeating-linear-gradient(90deg,#a0a0a0 0 1px,transparent 1px 2px);"></div>
<div class="t" style="left:639px;top:388px;font-family:'Liberation Sans', sans-serif;font-size:12px;color:#000;">Green</div>
<div class="t" style="left:799px;top:388px;font-family:'Liberation Sans', sans-serif;font-size:12px;color:#000;transform:scaleX(0.9);transform-origin:0 0;">255</div>
<div style="left:623px;top:414px;width:12px;height:1px;background:repeating-linear-gradient(90deg,#a0a0a0 0 1px,transparent 1px 2px);"></div>
<div class="t" style="left:639px;top:408px;font-family:'Liberation Sans', sans-serif;font-size:12px;color:#000;">Blue</div>
<div class="t" style="left:799px;top:408px;font-family:'Liberation Sans', sans-serif;font-size:12px;color:#000;transform:scaleX(0.9);transform-origin:0 0;">255</div>
<div style="left:623px;top:434px;width:12px;height:1px;background:repeating-linear-gradient(90deg,#a0a0a0 0 1px,transparent 1px 2px);"></div>
<div class="t" style="left:639px;top:428px;font-family:'Liberation Sans', sans-serif;font-size:12px;color:#000;">Unknown</div>
<div class="t" style="left:799px;top:428px;font-family:'Liberation Sans', sans-serif;font-size:12px;color:#000;transform:scaleX(0.9);transform-origin:0 0;">00</div>
<div style="left:603px;top:454px;width:12px;height:1px;background:repeating-linear-gradient(90deg,#a0a0a0 0 1px,transparent 1px 2px);"></div>
<div class="t" style="left:619px;top:448px;font-family:'Liberation Sans', sans-serif;font-size:12px;color:#a0a0a0;">DNAM - Notes</div>
<div style="left:603px;top:474px;width:12px;height:1px;background:repeating-linear-gradient(90deg,#a0a0a0 0 1px,transparent 1px 2px);"></div>
<div class="t" style="left:619px;top:468px;font-family:'Liberation Sans', sans-serif;font-size:12px;color:#000;">TNAM - Type</div>
<div class="t" style="left:799px;top:468px;font-family:'Liberation Sans', sans-serif;font-size:12px;color:#000;">Recipe Filter</div>
<div style="left:603px;top:494px;width:12px;height:1px;background:repeating-linear-gradient(90deg,#a0a0a0 0 1px,transparent 1px 2px);"></div>
<div class="t" style="left:619px;top:488px;font-family:'Liberation Sans', sans-serif;font-size:12px;color:#a0a0a0;">DATA - Attraction Rule</div>
<div style="left:603px;top:514px;width:12px;height:1px;background:repeating-linear-gradient(90deg,#a0a0a0 0 1px,transparent 1px 2px);"></div>
<div class="t" style="left:619px;top:508px;font-family:'Liberation Sans', sans-serif;font-size:12px;font-weight:bold;color:#000;transform:scaleX(0.98);transform-origin:0 0;">FULL - Name</div>
<div class="t" style="left:799px;top:508px;font-family:'Liberation Sans', sans-serif;font-size:12px;font-weight:bold;color:#000;transform:scaleX(0.967);transform-origin:0 0;">СЮДА БУДУТ ПОМЕЩЕНЫ ВСЕ ШМОТКИ ОТ ВАСИ ПУПКИНА</div>
<div style="left:603px;top:534px;width:12px;height:1px;background:repeating-linear-gradient(90deg,#a0a0a0 0 1px,transparent 1px 2px);"></div>
<div class="t" style="left:619px;top:528px;font-family:'Liberation Sans', sans-serif;font-size:12px;color:#a0a0a0;">NNAM - Display Name</div>
<div style="left:787px;top:504px;width:448px;height:20px;border:1px dotted #000;box-sizing:border-box;"></div>
<div style="left:583px;top:640px;width:51px;height:23px;background:#fff;"></div>
<div style="left:634px;top:641px;width:60px;height:22px;background:#f0f0f0;border:1px solid #d9d9d9;border-bottom:none;box-sizing:border-box;"></div>
<div class="t" style="left:638px;top:644px;font-family:'Liberation Sans', sans-serif;font-size:12px;color:#000;transform:scaleX(0.96);transform-origin:0 0;">Messages</div>
<div style="left:694px;top:641px;width:75px;height:22px;background:#f0f0f0;border:1px solid #d9d9d9;border-bottom:none;box-sizing:border-box;"></div>
<div class="t" style="left:700px;top:644px;font-family:'Liberation Sans', sans-serif;font-size:12px;color:#000;transform:scaleX(1.07);transform-origin:0 0;">Information</div>
<div style="left:769px;top:641px;width:74px;height:22px;background:#f0f0f0;border:1px solid #d9d9d9;border-bottom:none;box-sizing:border-box;"></div>
<div class="t" style="left:775px;top:644px;font-family:'Liberation Sans', sans-serif;font-size:12px;color:#000;transform:scaleX(0.985);transform-origin:0 0;">What&#x27;s New</div>
<div class="t" style="left:590px;top:646px;font-family:'Liberation Sans', sans-serif;font-size:12px;color:#000;">View</div>
<div style="left:4px;top:668px;width:1268px;height:1px;background:#d7d7d7;"></div>
<div style="left:4px;top:669px;width:1268px;height:1px;background:#fff;"></div>
<div style="left:1271px;top:671px;width:1px;height:20px;background:#d7d7d7;"></div>
<div class="t" style="left:6px;top:674px;font-family:'Liberation Sans', sans-serif;font-size:12px;color:#000;transform:scaleX(0.961);transform-origin:0 0;">Renumbered  \ [02] Dickys Pinup Outfit.esp \ [1] GRUP Top &quot;KYWD&quot; \ [19] NEW_OUTFIT_CATEGORY &quot;Dicky&#x27;s Pinup Наряд&quot; [KYWD:02000F99]</div>
<svg style="position:absolute;left:0;top:0" width="1276" height="695" viewBox="0 0 1276 695">
<path d="M142.3 413.3 C140.5 412.3 135.9 408.6 131.6 407.2 C127.3 405.8 123.1 405.5 116.3 404.7 C109.5 403.9 100.1 403.0 90.8 402.6 C81.5 402.2 66.2 402.2 60.3 402.6 C54.4 403.0 56.3 403.6 55.2 405.2 C54.1 406.8 54.0 409.9 53.7 412.3 C53.5 414.7 53.0 417.5 53.7 419.5 C54.5 421.5 55.4 422.3 58.2 424.5 C61.0 426.7 65.1 430.1 70.5 432.7 C75.9 435.2 84.0 438.0 90.8 439.8 C97.6 441.6 104.9 442.9 111.2 443.7 C117.5 444.5 122.5 445.2 128.5 444.9 C134.4 444.6 142.1 443.4 146.9 441.9 C151.7 440.4 154.8 438.2 157.1 435.8 C159.4 433.4 160.4 429.8 160.6 427.6 C160.8 425.4 160.2 425.0 158.1 422.5 C156.0 420.0 149.6 414.4 147.9 412.8" fill="none" stroke="#f00" stroke-width="3.6" stroke-linecap="round" stroke-linejoin="round"/>
</svg>
</body></html>
